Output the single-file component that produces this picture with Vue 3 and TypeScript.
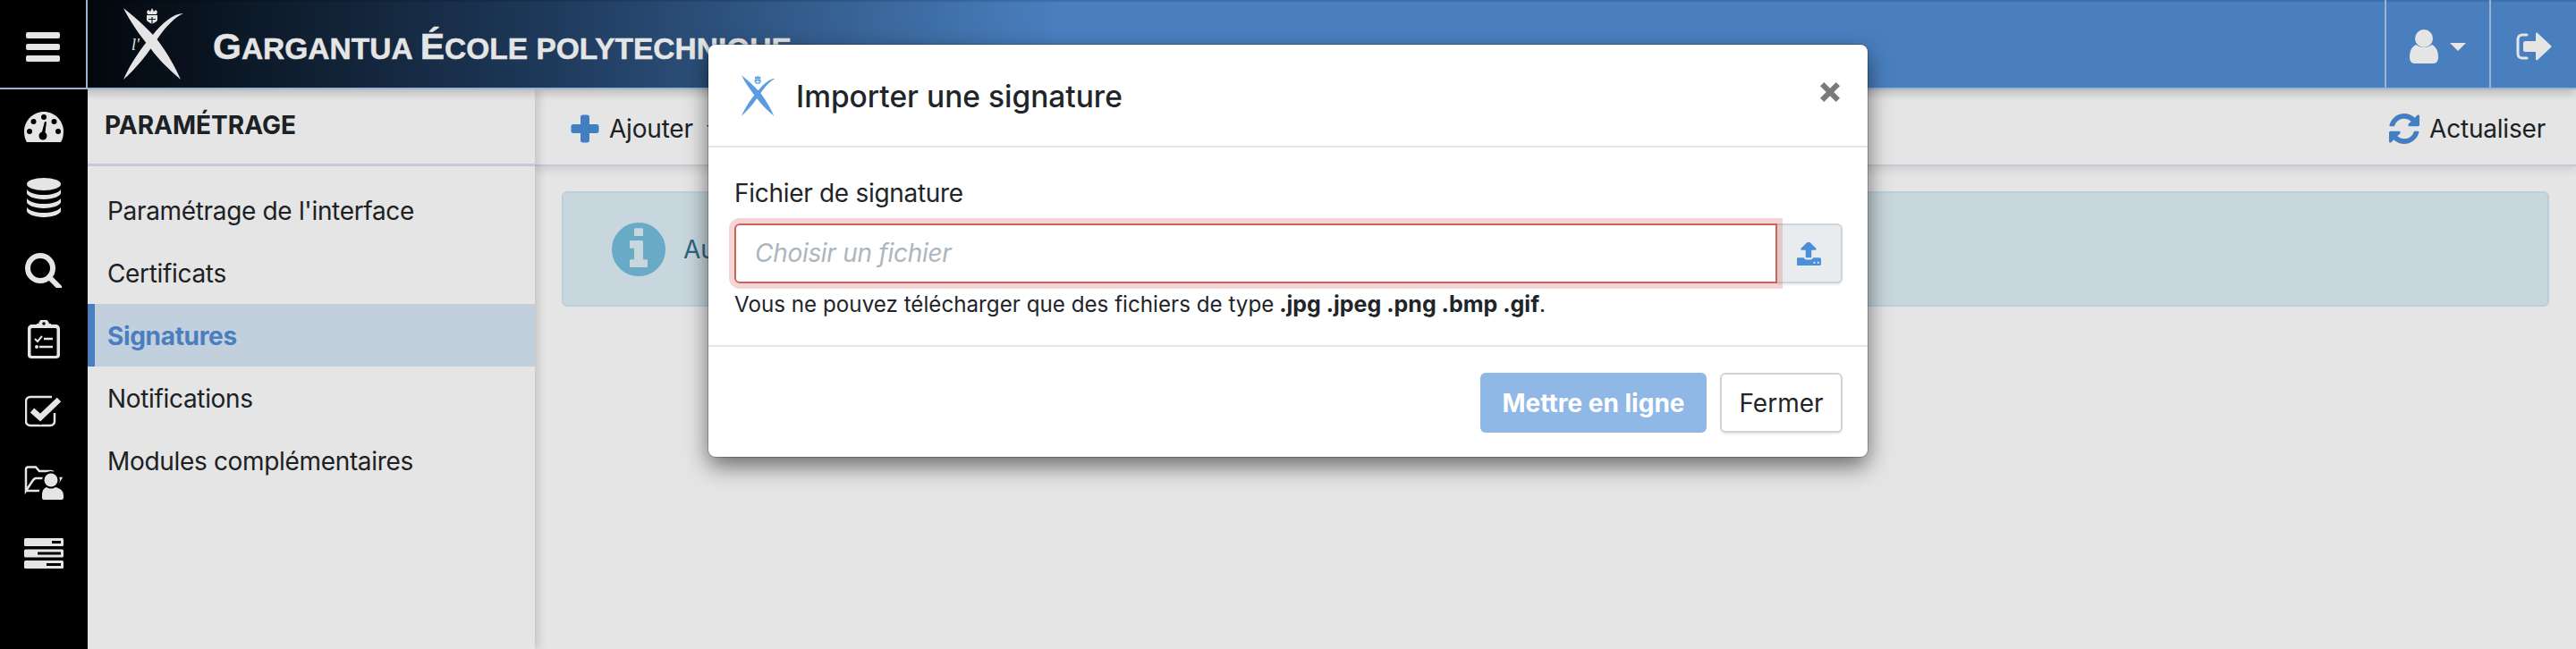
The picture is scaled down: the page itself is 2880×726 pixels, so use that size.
<template>
  <div class="page">
    <header class="topbar">
      <button class="burger" aria-label="Menu"><span></span><span></span><span></span></button>
      <div class="brand">
        <svg class="logo-big" viewBox="0 0 67 80">
          <path v-for="d in xPaths" :key="d" :d="d" fill="#fff" />
          <path :d="crownPath" fill="#fff" />
          <path d="M32 10v8M28 12.500h8" stroke="#10202f" stroke-width="1.200" />
          <text x="9" y="47" class="logo-script" fill="#fff">l'</text>
        </svg>
        <span class="brand-name"><span class="cap">G</span>argantua <span class="cap">É</span>cole polytechnique</span>
      </div>
      <div class="top-cell user-cell">
        <svg width="32" height="38" viewBox="0 0 32 38">
          <circle cx="16" cy="10" r="10" fill="#fff" />
          <path d="M0 31c0-8 3-12 7-14 3 2 6 3 9 3s6-1 9-3c4 2 7 6 7 14 0 4-2 7-5 7H5c-3 0-5-3-5-7z" fill="#fff" />
        </svg>
        <i class="caret"></i>
      </div>
      <div class="top-cell logout-cell">
        <svg width="40" height="32" viewBox="0 0 40 32">
          <path d="M12 3H7C4 3 2 5 2 8v16c0 3 2 5 5 5h5" fill="none" stroke="#fff" stroke-width="3" stroke-linecap="round" />
          <path d="M10 10h12V2c0-1 1-2 2-1l15 14c.8.8.8 1.500 0 2L24 31c-1 1-2 0-2-1v-8H10c-1 0-2-1-2-2v-8c0-1 1-2 2-2z" fill="#fff" />
        </svg>
      </div>
    </header>

    <div class="main">
      <nav class="rail">
        <div class="rail-item">
          <svg width="44" height="34" viewBox="0 0 44 34">
            <path d="M3 34C1 31 0 27 0 22 0 10 10 0 22 0s22 10 22 22c0 5-1 9-3 12z" fill="#fff" />
            <g fill="#000">
              <circle cx="22" cy="6" r="3" /><circle cx="10.500" cy="11" r="3" /><circle cx="33.500" cy="11" r="3" />
              <circle cx="6" cy="22" r="3" /><circle cx="38" cy="22" r="3" /><circle cx="21" cy="27" r="4.500" />
              <path d="M19 26l4-15 2 .5-2 15z" />
            </g>
          </svg>
        </div>
        <div class="rail-item">
          <svg width="38" height="44" viewBox="0 0 38 44" fill="#fff">
            <ellipse cx="19" cy="7" rx="19" ry="7" />
            <path d="M0 13c3 4 11 6 19 6s16-2 19-6v4c0 3-8 7-19 7S0 20 0 17z" />
            <path d="M0 23c3 4 11 6 19 6s16-2 19-6v4c0 3-8 7-19 7S0 30 0 27z" />
            <path d="M0 33c3 4 11 6 19 6s16-2 19-6v4c0 3-8 7-19 7S0 40 0 37z" />
          </svg>
        </div>
        <div class="rail-item">
          <svg width="42" height="42" viewBox="0 -3 42 42" fill="none" stroke="#fff" stroke-width="6" stroke-linecap="round">
            <circle cx="17" cy="17" r="14" />
            <path d="M27 27l11 11" />
          </svg>
        </div>
        <div class="rail-item">
          <svg width="38" height="44" viewBox="0 0 38 44">
            <path d="M6 5h7a6 6 0 0 1 12 0h7c3 0 5 2 5 5v29c0 3-2 4-5 4H6c-3 0-5-1-5-4V10c0-3 2-5 5-5z" fill="#fff" />
            <rect x="4.500" y="9" width="29" height="31" rx="1.500" fill="#000" />
            <path d="M11 4h16v5H11z" fill="#fff" />
            <circle cx="19" cy="4" r="1.800" fill="#000" />
            <path d="M9 21l3 3 5-6" fill="none" stroke="#fff" stroke-width="2" />
            <path d="M19 21h10M14 30h15" stroke="#fff" stroke-width="2.500" />
            <circle cx="11" cy="30" r="2" fill="#fff" />
          </svg>
        </div>
        <div class="rail-item">
          <svg width="42" height="36" viewBox="0 0 42 36" fill="none">
            <path d="M33 20v9c0 3-2 5-5 5H6c-3 0-5-2-5-5V7c0-3 2-5 5-5h24" stroke="#fff" stroke-width="2.500" />
            <path d="M7 18l10 8L38 4" stroke="#000" stroke-width="11" />
            <path d="M8 17l9 8L38 5" stroke="#fff" stroke-width="6.500" />
          </svg>
        </div>
        <div class="rail-item">
          <svg width="44" height="40" viewBox="0 -2 44 40">
            <path d="M2 28V4c0-1.500 1-2.500 2.500-2.500H13L17 6h13c1.500 0 2.500 1 2.500 2.500V11M2 28l8-12c1-1 2-2 3-2h28l-8 13c-.5 1-1.500 1-2.500 1H4c-1 0-2 0-2-1z" fill="none" stroke="#fff" stroke-width="2.500" />
            <circle cx="30" cy="16" r="10" fill="#000" />
            <path d="M20 38c-1 0-2-1-2-2v-4c0-6 3-9 7-10 3 2 7 2 10 0 5 1 8 4 8 10v4c0 1-1 2-2 2z" fill="#000" stroke="#000" stroke-width="3" />
            <circle cx="30" cy="16" r="7.500" fill="#fff" />
            <path d="M22 38c-1 0-2-1-2-2v-3c0-5 2-8 5-9 3 2 7 2 10 0 5 1 9 4 9 9v3c0 1-1 2-2 2z" fill="#fff" />
          </svg>
        </div>
        <div class="rail-item">
          <svg width="44" height="34" viewBox="0 0 44 34">
            <rect y="0" width="44" height="9" rx="1.500" fill="#fff" />
            <rect y="12.500" width="44" height="9" rx="1.500" fill="#fff" />
            <rect y="25" width="44" height="9" rx="1.500" fill="#fff" />
            <rect x="31" y="3" width="10" height="3" fill="#000" />
            <rect x="15" y="15.500" width="26" height="3" fill="#000" />
            <rect x="25" y="28" width="16" height="3" fill="#000" />
          </svg>
        </div>
      </nav>

      <aside class="side">
        <h2 class="side-title">Paramétrage</h2>
        <ul class="side-list">
          <li v-for="item in sideItems" :key="item" :class="{ active: item === activeItem }">{{ item }}</li>
        </ul>
      </aside>

      <section class="content">
        <div class="toolbar">
          <div class="tool">
            <svg width="32" height="32" viewBox="0 0 32 32">
              <path d="M11 3c0-1.500 1-2.500 2.500-2.500h5C20 .5 21 1.500 21 3v8h8c1.500 0 2.500 1 2.500 2.500v5c0 1.500-1 2.500-2.500 2.500h-8v8c0 1.500-1 2.500-2.500 2.500h-5c-1.500 0-2.500-1-2.500-2.500v-8H3c-1.500 0-2.500-1-2.500-2.500v-5C.5 12 1.500 11 3 11h8z" fill="#4a8ed8" />
            </svg>
            <span>Ajouter</span>
            <i class="caret caret-dark"></i>
          </div>
          <div class="tool">
            <svg width="34" height="34" viewBox="0 0 1536 1536">
              <path fill="#4a8ed8" :d="refreshPath" />
            </svg>
            <span>Actualiser</span>
          </div>
        </div>
        <div class="alert">
          <svg width="60" height="60" viewBox="0 128 1536 1536">
            <path fill="#75bedd" :d="infoPath" />
          </svg>
          <span>Aucune signature</span>
        </div>
      </section>
    </div>

    <div class="backdrop"></div>

    <div class="modal">
      <div class="modal-head">
        <svg class="logo-small" width="38" height="46" viewBox="0 0 67 80">
          <path v-for="d in xPaths" :key="d" :d="d" fill="#5a9ce0" />
          <path :d="crownPath" fill="#5a9ce0" />
          <path d="M32 10v8M28 12.500h8" stroke="#fff" stroke-width="1.500" />
        </svg>
        <h3>Importer une signature</h3>
        <button class="close" aria-label="Fermer">
          <svg width="22" height="22" viewBox="3 3 18 18">
            <path d="M3 6.500L6.500 3 12 8.500 17.500 3 21 6.500 15.500 12 21 17.500 17.500 21 12 15.500 6.500 21 3 17.500 8.500 12z" fill="#7a7a7a" />
          </svg>
        </button>
      </div>
      <div class="modal-body">
        <label class="field-label">Fichier de signature</label>
        <div class="file-row">
          <div class="file-input">Choisir un fichier</div>
          <div class="file-addon">
            <svg width="27" height="26" viewBox="0 0 1600 1536">
              <path fill="#4a90d9" :d="uploadPath" />
            </svg>
          </div>
        </div>
        <p class="help">Vous ne pouvez télécharger que des fichiers de type <b>.jpg .jpeg .png .bmp .gif</b>.</p>
      </div>
      <div class="modal-foot">
        <button class="btn btn-primary">Mettre en ligne</button>
        <button class="btn btn-plain">Fermer</button>
      </div>
    </div>
  </div>
</template>

<script setup lang="ts">
const sideItems: string[] = [
  "Paramétrage de l'interface",
  'Certificats',
  'Signatures',
  'Notifications',
  'Modules complémentaires'
]
const activeItem = 'Signatures'

// the two blades of the logo
const xPaths: string[] = [
  'M0 0C18 14 30 26 39 37C50 52 58 66 64 80C50 68 39 57 31 46C18 30 8 16 0 0Z',
  'M0 80C8 62 20 44 32 31C44 16 56 6 67 6C58 10 48 20 39 33C28 50 14 68 0 80Z'
]
const crownPath = 'M26 4l2-2 2 2 2-4 2 4 2-2 2 2-1 3h-10zM26 8h12v5c0 2-3 3-6 5-3-2-6-3-6-5z'

const refreshPath = 'M1511 928q0 5-1 7-64 268-268 434.500t-478 166.500q-146 0-282.500-55t-243.500-157l-129 129q-19 19-45 19t-45-19-19-45v-448q0-26 19-45t45-19h448q26 0 45 19t19 45-19 45l-137 137q71 66 161 102t187 36q134 0 250-65t186-179q11-17 53-117 8-23 30-23h192q13 0 22.500 9.500t9.500 22.500zm25-800v448q0 26-19 45t-45 19h-448q-26 0-45-19t-19-45 19-45l138-138q-148-137-349-137-134 0-250 65t-186 179q-11 17-53 117-8 23-30 23h-199q-13 0-22.500-9.500t-9.500-22.500v-7q65-268 270-434.500t480-166.500q146 0 284 55.500t245 156.500l130-129q19-19 45-19t45 19 19 45z'
const infoPath = 'M1024 1376v-160q0-14-9-23t-23-9h-96v-512q0-14-9-23t-23-9h-320q-14 0-23 9t-9 23v160q0 14 9 23t23 9h96v320h-96q-14 0-23 9t-9 23v160q0 14 9 23t23 9h448q14 0 23-9t9-23zm-128-896v-160q0-14-9-23t-23-9h-192q-14 0-23 9t-9 23v160q0 14 9 23t23 9h192q14 0 23-9t9-23zm640 416q0 209-103 385.500t-279.500 279.500-385.500 103-385.500-103-279.500-279.500-103-385.500 103-385.500 279.500-279.500 385.500-103 385.500 103 279.500 279.500 103 385.500z'
const uploadPath = 'M1216 1344q0-26-19-45t-45-19-45 19-19 45 19 45 45 19 45-19 19-45zm256 0q0-26-19-45t-45-19-45 19-19 45 19 45 45 19 45-19 19-45zm128-224v320q0 40-28 68t-68 28h-1472q-40 0-68-28t-28-68v-320q0-40 28-68t68-28h427q21 56 70.500 92t110.500 36h256q61 0 110.500-36t70.500-92h427q40 0 68 28t28 68zm-325-648q-17 40-59 40h-256v448q0 26-19 45t-45 19h-256q-26 0-45-19t-19-45v-448h-256q-42 0-59-40-17-39 14-69l448-448q18-19 45-19t45 19l448 448q31 30 14 69z'
</script>

<style>
html, body {
  margin: 0;
  overflow: hidden;
  background: #fff;
}
</style>

<style scoped>
.page {
  position: relative;
  width: 2880px;
  height: 726px;
  overflow: hidden;
  font-family: Inter, "Liberation Sans", sans-serif;
  font-size: 28px;
  color: #212529;
}

.topbar {
  display: flex;
  height: 98px;
  border-bottom: 2px solid #a9c9ee;
  background: linear-gradient(90deg, #04090f 100px, #213f63 600px, #528ed5 1180px);
  box-shadow: inset 0 2px 0 rgba(0, 0, 0, 0.12), 0 4px 10px rgba(0, 0, 0, 0.2);
  position: relative;
  z-index: 2;
}

.burger {
  width: 98px;
  flex: none;
  border: 0;
  border-right: 2px solid #a9c9ee;
  background: #000;
  padding: 6px 0 0;
  display: flex;
  flex-direction: column;
  align-items: center;
  justify-content: center;
  gap: 6px;
}

.burger span {
  width: 38px;
  height: 7px;
  border-radius: 2px;
  background: #fff;
}

.brand {
  flex: 1;
  display: flex;
  align-items: center;
  padding-left: 40px;
}

.logo-big {
  width: 67px;
  height: 80px;
  margin-right: 33px;
}

.logo-script {
  font-family: "Liberation Serif", serif;
  font-style: italic;
  font-size: 18px;
}

.brand-name {
  padding-top: 6px;
  font-size: 33.500px;
  font-weight: 700;
  text-transform: uppercase;
  font-family: "Liberation Sans", sans-serif;
  -webkit-text-stroke: 0.5px #fff;
  color: #fff;
  white-space: nowrap;
}

.brand-name .cap {
  font-size: 41px;
}

.top-cell {
  display: flex;
  align-items: center;
  justify-content: center;
  padding-top: 6px;
  box-sizing: border-box;
  border-left: 2px solid #a9c9ee;
}

.user-cell {
  width: 117px;
  gap: 13px;
}

.logout-cell {
  width: 97px;
}

.caret {
  width: 0;
  height: 0;
  border-left: 9px solid transparent;
  border-right: 9px solid transparent;
  border-top: 9px solid #fff;
}

.caret-dark {
  border-top-color: #212529;
  margin-left: 4px;
}

.main {
  display: flex;
  height: 626px;
}

.rail {
  width: 98px;
  flex: none;
  background: #000;
  padding-top: 2px;
}

.rail-item {
  height: 79.5px;
  display: flex;
  align-items: center;
  justify-content: center;
}

.side {
  width: 500px;
  flex: none;
  background: #fff;
  box-shadow: 4px 0 10px rgba(0, 0, 0, 0.15);
  position: relative;
  z-index: 1;
}

.side-title {
  margin: 0;
  height: 83px;
  padding: 0 0 0 19px;
  border-bottom: 3px solid #e0deef;
  line-height: 80px;
  font-size: 28px;
  font-weight: 700;
  text-transform: uppercase;
}

.side-list {
  list-style: none;
  margin: 14px 0 0;
  padding: 0;
}

.side-list li {
  height: 70px;
  line-height: 72px;
  padding-left: 22px;
  letter-spacing: -0.33px;
}

.side-list li.active {
  padding-left: 14px;
  border-left: 8px solid #528ed5;
  background: #d9e7f7;
  color: #528ed5;
  font-weight: 700;
}

.content {
  flex: 1;
  background: #fff;
}

.toolbar {
  height: 80px;
  border-bottom: 2px solid #e0deef;
  box-shadow: 0 4px 10px rgba(0, 0, 0, 0.1);
  display: flex;
  align-items: center;
  justify-content: space-between;
  padding: 4px 34px 0 40px;
}

.tool {
  display: flex;
  align-items: center;
  gap: 11px;
  letter-spacing: -0.2px;
}

.alert {
  margin: 28px 30px 0;
  height: 129px;
  background: #dfeff6;
  border: 2px solid #d0e8f2;
  border-radius: 6px;
  box-sizing: border-box;
  display: flex;
  align-items: center;
  padding-left: 54px;
  gap: 20px;
  color: #31708f;
}

.backdrop {
  position: absolute;
  inset: 0;
  z-index: 5;
  background: rgba(0, 0, 0, 0.1);
}

.modal {
  position: absolute;
  z-index: 6;
  left: 792px;
  top: 50px;
  width: 1296px;
  height: 461px;
  background: #fff;
  border-radius: 8px;
  box-shadow: 0 0 0 1px rgba(0, 0, 0, 0.2), 0 10px 26px rgba(0, 0, 0, 0.55);
  display: flex;
  flex-direction: column;
}

.modal-head {
  height: 113px;
  flex: none;
  border-bottom: 2px solid #e2e6ea;
  display: flex;
  align-items: center;
  padding-left: 37px;
  position: relative;
}

.logo-small {
  margin-right: 23px;
}

.modal-head h3 {
  margin: 0;
  padding-top: 3px;
  font-size: 33.500px;
  font-weight: 500;
}

.close {
  position: absolute;
  right: 31px;
  top: 42px;
  padding: 0;
  border: 0;
  background: none;
  line-height: 0;
}

.modal-body {
  flex: 1;
  padding: 33px 28px 0 29px;
  border-bottom: 2px solid #e2e6ea;
}

.field-label {
  display: block;
  line-height: 36px;
  margin-bottom: 16px;
  letter-spacing: -0.3px;
}

.file-row {
  display: flex;
  height: 67px;
}

.file-input {
  flex: 1;
  box-sizing: border-box;
  border: 2px solid #d0605a;
  border-radius: 6px 0 0 6px;
  box-shadow: 0 0 0 6px rgba(208, 96, 90, 0.25);
  padding-left: 21px;
  line-height: 63px;
  font-style: italic;
  letter-spacing: -0.3px;
  color: #adb5bd;
  position: relative;
}

.file-addon {
  width: 73px;
  flex: none;
  box-sizing: border-box;
  background: #e9ecef;
  border: 2px solid #ced4da;
  border-left: 0;
  border-radius: 0 6px 6px 0;
  box-shadow: 0 2px 2px rgba(0, 0, 0, 0.08);
  display: flex;
  align-items: center;
  justify-content: center;
}

.help {
  margin: 5px 0 0;
  font-size: 24.200px;
  line-height: 36px;
}

.help b {
  font-size: 25px;
  margin-left: -1px;
}

.modal-foot {
  height: 123px;
  flex: none;
  box-sizing: border-box;
  padding: 29px 28px 0 0;
  display: flex;
  justify-content: flex-end;
  gap: 15px;
}

.btn {
  height: 67px;
  font-family: inherit;
  font-size: 28px;
  border-radius: 6px;
  padding: 0;
}

.btn-primary {
  width: 253px;
  border: 0;
  background: #8fb8e6;
  color: #fff;
  font-weight: 700;
}

.btn-plain {
  width: 137px;
  border: 2px solid #ced4da;
  background: #fff;
  color: #212529;
  box-shadow: 0 2px 2px rgba(0, 0, 0, 0.08);
}
</style>
